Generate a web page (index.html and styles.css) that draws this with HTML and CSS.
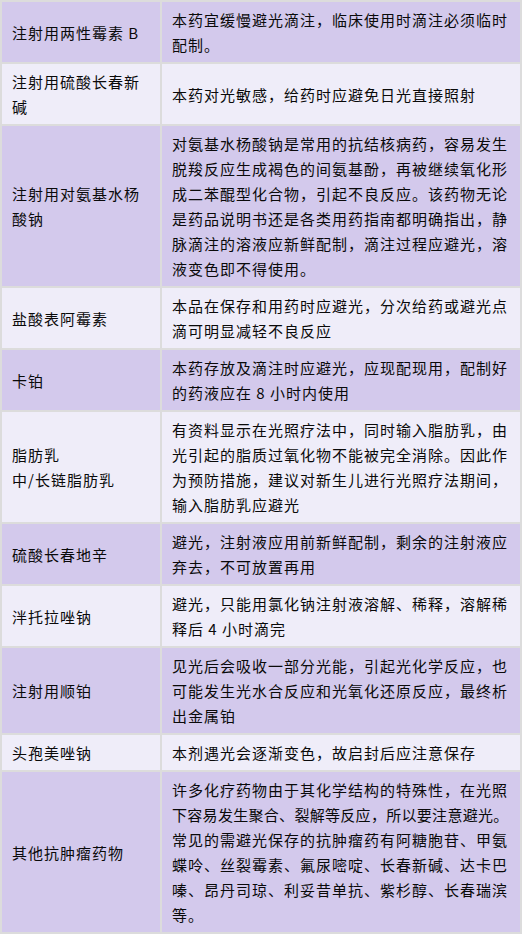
FILE: index.html
```html
<!DOCTYPE html>
<html lang="zh-CN">
<head>
<meta charset="utf-8">
<title>避光药物</title>
<link rel="stylesheet" href="styles.css">
</head>
<body>
<table class="drug-table">
  <colgroup>
    <col class="col-name">
    <col class="col-note">
  </colgroup>
  <tbody>
    <tr class="row-dark">
      <td>注射用两性霉素 B</td>
      <td>本药宜缓慢避光滴注，临床使用时滴注必须临时配制。</td>
    </tr>
    <tr class="row-light">
      <td>注射用硫酸长春新碱</td>
      <td>本药对光敏感，给药时应避免日光直接照射</td>
    </tr>
    <tr class="row-dark">
      <td>注射用对氨基水杨酸钠</td>
      <td>对氨基水杨酸钠是常用的抗结核病药，容易发生脱羧反应生成褐色的间氨基酚，再被继续氧化形成二苯醌型化合物，引起不良反应。该药物无论是药品说明书还是各类用药指南都明确指出，静脉滴注的溶液应新鲜配制，滴注过程应避光，溶液变色即不得使用。</td>
    </tr>
    <tr class="row-light">
      <td>盐酸表阿霉素</td>
      <td>本品在保存和用药时应避光，分次给药或避光点滴可明显减轻不良反应</td>
    </tr>
    <tr class="row-dark">
      <td>卡铂</td>
      <td>本药存放及滴注时应避光，应现配现用，配制好的药液应在 8 小时内使用</td>
    </tr>
    <tr class="row-light">
      <td>脂肪乳<br>中/长链脂肪乳</td>
      <td>有资料显示在光照疗法中，同时输入脂肪乳，由光引起的脂质过氧化物不能被完全消除。因此作为预防措施，建议对新生儿进行光照疗法期间，输入脂肪乳应避光</td>
    </tr>
    <tr class="row-dark">
      <td>硫酸长春地辛</td>
      <td>避光，注射液应用前新鲜配制，剩余的注射液应弃去，不可放置再用</td>
    </tr>
    <tr class="row-light">
      <td>泮托拉唑钠</td>
      <td>避光，只能用氯化钠注射液溶解、稀释，溶解稀释后 4 小时滴完</td>
    </tr>
    <tr class="row-dark">
      <td>注射用顺铂</td>
      <td>见光后会吸收一部分光能，引起光化学反应，也可能发生光水合反应和光氧化还原反应，最终析出金属铂</td>
    </tr>
    <tr class="row-light">
      <td>头孢美唑钠</td>
      <td>本剂遇光会逐渐变色，故启封后应注意保存</td>
    </tr>
    <tr class="row-dark">
      <td>其他抗肿瘤药物</td>
      <td>许多化疗药物由于其化学结构的特殊性，在光照<span class="tight">下容易发生聚合、裂解等反应，所以要注意避光。</span>常见的需避光保存的抗肿瘤药有阿糖胞苷、甲氨蝶呤、丝裂霉素、氟尿嘧啶、长春新碱、达卡巴嗪、昂丹司琼、利妥昔单抗、紫杉醇、长春瑞滨等。</td>
    </tr>
  </tbody>
</table>
</body>
</html>
```

FILE: styles.css
```css
html, body {
  margin: 0;
  padding: 0;
  background: #ffffff;
}

.drug-table {
  width: 522px;
  table-layout: fixed;
  border-collapse: separate;
  border-spacing: 2px;
  background: #dcdcdc;
  font-family: "Noto Sans CJK SC", "Noto Sans", sans-serif;
  font-size: 15px;
  line-height: 25px;
  letter-spacing: 1px;
  color: #0a0a0a;
}

.col-name {
  width: 158px;
}

.col-note {
  width: 358px;
}

.drug-table td {
  padding: 5px 10px;
  vertical-align: middle;
  text-align: left;
}

.row-dark td {
  background: #d3c9ec;
}

.row-light td {
  background: #efedf9;
}

.tight {
  letter-spacing: 0.3px;
}
```
